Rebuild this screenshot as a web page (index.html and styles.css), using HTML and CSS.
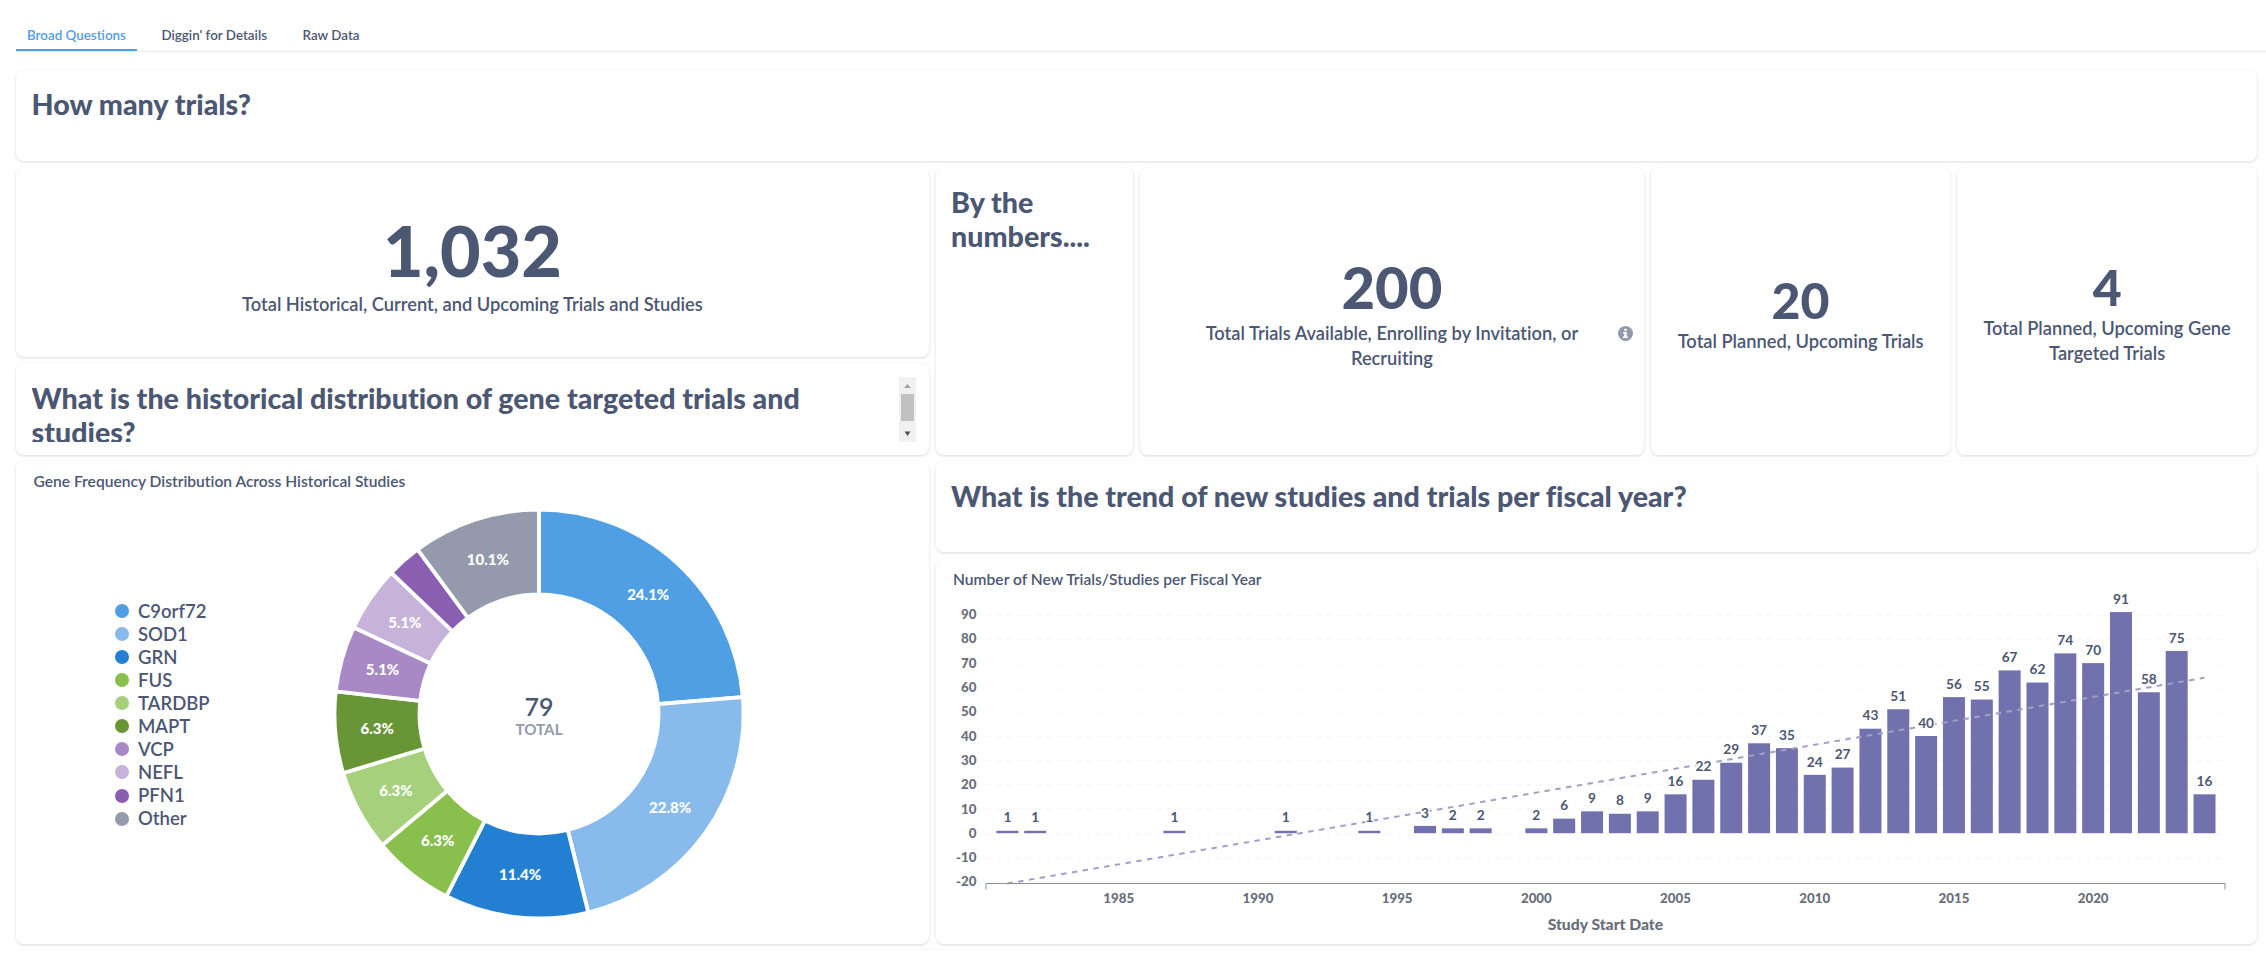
FILE: index.html
```html
<!DOCTYPE html>
<html lang="en">
<head>
<meta charset="utf-8">
<title>Trials dashboard</title>
<link rel="stylesheet" href="styles.css">
</head>
<body>
<nav class="tabs">
  <a class="tab tab-active">Broad Questions</a>
  <a class="tab">Diggin' for Details</a>
  <a class="tab">Raw Data</a>
</nav>
<main class="grid">
  <section class="card heading-card span-full"><h2 class="heading">How many trials?</h2></section>

  <section class="card scalar span-total">
    <div class="number number-xl">1,032</div>
    <div class="label">Total Historical, Current, and Upcoming Trials and Studies</div>
  </section>
  <section class="card heading-card span-by"><h2 class="heading">By the numbers....</h2></section>
  <section class="card scalar span-available">
    <div class="number number-lg">200</div>
    <div class="label label-narrow">Total Trials Available, Enrolling by Invitation, or Recruiting</div>
    <svg class="info" viewBox="0 0 16 16"><circle cx="8" cy="8" r="8" fill="#949aab"/><path d="M6.6 2.8h2.8v2.3H6.6zM5.4 6.4h4v4.8h1.3v1.7H5.3v-1.7h1.3V8.1H5.4z" fill="#fff"/></svg>
  </section>
  <section class="card scalar span-planned">
    <div class="number number-md">20</div>
    <div class="label">Total Planned, Upcoming Trials</div>
  </section>
  <section class="card scalar span-gene">
    <div class="number number-md">4</div>
    <div class="label">Total Planned, Upcoming Gene Targeted Trials</div>
  </section>

  <section class="card heading-card span-hist">
    <div class="scroller">
      <h2 class="heading">What is the historical distribution of gene targeted trials and studies?</h2>
      <div class="scrollbar">
        <svg class="arrow" viewBox="0 0 17 17"><path d="M5 11h7L8.5 7z" fill="#a3a3a3"/></svg>
        <div class="thumb"></div>
        <svg class="arrow" viewBox="0 0 17 17"><path d="M5.500 6.500h6L8.500 11z" fill="#505050"/></svg>
      </div>
    </div>
  </section>

  <section class="card chart-card span-pie">
    <h3 class="chart-title">Gene Frequency Distribution Across Historical Studies</h3>
    <div class="pie-body">
      <ul class="legend" id="legend"></ul>
      <svg class="pie" id="pie" viewBox="-206 -206 412 412"></svg>
    </div>
  </section>

  <section class="card heading-card span-trend"><h2 class="heading">What is the trend of new studies and trials per fiscal year?</h2></section>

  <section class="card chart-card span-bars">
    <h3 class="chart-title">Number of New Trials/Studies per Fiscal Year</h3>
    <svg class="bars" id="bars" viewBox="935.6 588.5 1321 355"></svg>
  </section>
  <section class="card span-next"></section>
</main>
<script src="charts.js"></script>
</body>
</html>
```
FILE: styles.css
```css
* { box-sizing: border-box; }
html, body { height: 958px; overflow: hidden; }
body {
  margin: 0;
  background: #fff;
  color: #4c5773;
  font-family: Lato, "Liberation Sans", sans-serif;
  font-weight: 600;
  font-variant-ligatures: none;
}
.tabs {
  display: flex;
  gap: 13.5px;
  margin-left: 16px;
  height: 52px;
  padding-top: 18px;
  border-bottom: 1px solid #e9eaec;
}
.tab {
  height: 33px;
  padding: 9px 11px 0;
  font-size: 13.4px;
  line-height: 17px;
  white-space: nowrap;
}
.tab-active { color: #509ee3; border-bottom: 2px solid #509ee3; }
.grid {
  display: grid;
  grid-template-columns: repeat(22, minmax(0, 1fr));
  grid-template-rows: repeat(18, 42.55px) 7.2px;
  gap: 6.4px 6.8px;
  margin: 17.5px 9px 0 16px;
}
.card {
  background: #fff;
  border-radius: 8px;
  box-shadow: 0 1px 3px rgba(0, 0, 0, 0.15);
  min-width: 0;
  min-height: 0;
}
.span-full { grid-column: 1 / 23; grid-row: 1 / 3; }
.span-total { grid-column: 1 / 10; grid-row: 3 / 7; }
.span-by { grid-column: 10 / 12; grid-row: 3 / 9; }
.span-available { grid-column: 12 / 17; grid-row: 3 / 9; }
.span-planned { grid-column: 17 / 20; grid-row: 3 / 9; }
.span-gene { grid-column: 20 / 23; grid-row: 3 / 9; }
.span-hist { grid-column: 1 / 10; grid-row: 7 / 9; }
.span-pie { grid-column: 1 / 10; grid-row: 9 / 19; }
.span-trend { grid-column: 10 / 23; grid-row: 9 / 11; }
.span-bars { grid-column: 10 / 23; grid-row: 11 / 19; }
.span-next { grid-column: 1 / 23; grid-row: 19; border-radius: 8px 8px 0 0; box-shadow: 0 -1px 2px rgba(0, 0, 0, 0.04); }

.heading-card { padding: 14px 13px 13px 15.5px; }
.heading { margin: 0; padding-top: 3.5px; font-size: 28.6px; line-height: 34.3px; font-weight: 900; }
.scroller { display: flex; justify-content: space-between; height: 65px; overflow: hidden; }
.scrollbar { width: 17px; flex: none; background: #f1f1f1; display: flex; flex-direction: column; align-items: center; }
.arrow { display: block; width: 17px; height: 17px; }
.thumb { width: 13px; height: 27px; background: #c1c1c1; margin-bottom: 4px; }

.scalar {
  position: relative;
  display: flex;
  flex-direction: column;
  align-items: center;
  justify-content: center;
  padding: 6px 20px 0;
  text-align: center;
}
.number { font-weight: 900; }
.number-xl { font-size: 70px; line-height: 74px; margin-bottom: 5px; }
.number-lg { font-size: 58px; line-height: 60px; margin-bottom: 4px; }
.number-md { font-size: 50px; line-height: 52px; margin-bottom: 3px; }
.label { font-size: 18.3px; line-height: 25px; }
.label-narrow { width: 400px; }
.info { position: absolute; right: 10.5px; top: 159px; width: 15px; height: 15px; }

.chart-card { display: flex; flex-direction: column; }
.chart-title { margin: 0; padding: 10px 0 0 17.5px; height: 30px; font-size: 15.6px; line-height: 20px; font-weight: 600; }
.pie-body { display: flex; align-items: flex-start; }
.legend { list-style: none; margin: 108.5px 0 0 98.5px; padding: 0; width: 218.5px; }
.legend-item { display: flex; align-items: center; gap: 9.5px; height: 23.07px; font-size: 18.5px; line-height: 23px; }
.dot { width: 14px; height: 14px; border-radius: 50%; flex: none; }
.pie { width: 412px; height: 412px; margin-top: 17px; display: block; }
.bars { width: 1321px; height: 355px; display: block; }
.slice { stroke: #fff; stroke-width: 3.8; }
.slice-label { fill: #fff; font-size: 15px; font-weight: 900; text-anchor: middle; }
.total { fill: #4c5773; font-size: 25px; text-anchor: middle; }
.total-caption { fill: #949aab; font-size: 15.2px; font-weight: 700; text-anchor: middle; }
.gridline { stroke: #f3f3f5; stroke-width: 1; stroke-dasharray: 5 5; }
.axis { stroke: #8d9099; stroke-width: 1; fill: none; }
.bar { fill: #7172ad; }
.trend { stroke: #a39fc6; stroke-width: 2; stroke-dasharray: 5.450 5.450; fill: none; }
.tick { fill: #696e7b; font-size: 13.3px; font-weight: 900; }
.tick-y { text-anchor: end; }
.tick-x { text-anchor: middle; }
.axis-title { fill: #696e7b; font-size: 15.7px; font-weight: 900; text-anchor: middle; }
.value { fill: #4c5773; font-size: 13.7px; font-weight: 700; text-anchor: middle; stroke: #fff; stroke-width: 3; paint-order: stroke; stroke-linejoin: round; }
```
FILE: charts.js
```js
const NS = "http://www.w3.org/2000/svg";
function add(parent, tag, attrs, text) {
  const el = document.createElementNS(NS, tag);
  for (const k in attrs) el.setAttribute(k, attrs[k]);
  if (text !== undefined) el.textContent = text;
  parent.appendChild(el);
  return el;
}

// Donut of gene frequencies
const genes = [
  ["C9orf72", 19, "#509ee3", "24.1%"],
  ["SOD1", 18, "#88bbec", "22.8%"],
  ["GRN", 9, "#227fd2", "11.4%"],
  ["FUS", 5, "#88bf4d", "6.3%"],
  ["TARDBP", 5, "#a6d07b", "6.3%"],
  ["MAPT", 5, "#689636", "6.3%"],
  ["VCP", 4, "#a989c5", "5.1%"],
  ["NEFL", 4, "#c7b3da", "5.1%"],
  ["PFN1", 2, "#8a5eb0", ""],
  ["Other", 8, "#949aab", "10.1%"]
];
const pie = document.getElementById("pie");
const legend = document.getElementById("legend");
const R = 204.5, r = 119.5;
// Each slice gets a fixed pad on top of its share of the circle
const PAD = 0.0165;
const unit = (2 * Math.PI - genes.length * PAD) / 79;
const at = (rad, a) => (rad * Math.sin(a)).toFixed(2) + " " + (-rad * Math.cos(a)).toFixed(2);
let angle = 0;
const labels = [];
genes.forEach(([name, count, color, pct]) => {
  const end = angle + count * unit + PAD;
  add(pie, "path", {
    class: "slice", fill: color,
    d: `M${at(R, angle)}A${R} ${R} 0 0 1 ${at(R, end)}L${at(r, end)}A${r} ${r} 0 0 0 ${at(r, angle)}Z`
  });
  labels.push([pct, (angle + end) / 2]);
  angle = end;
  const li = document.createElement("li");
  li.className = "legend-item";
  const dot = document.createElement("span");
  dot.className = "dot";
  dot.style.background = color;
  li.append(dot, name);
  legend.appendChild(li);
});
labels.forEach(([t, a]) => {
  if (t) add(pie, "text", { class: "slice-label", x: 162 * Math.sin(a) - 0.5, y: -162 * Math.cos(a) + 5 }, t);
});
add(pie, "text", { class: "total", x: 0, y: 1.5 }, "79");
add(pie, "text", { class: "total-caption", x: 0, y: 21 }, "TOTAL");

// Studies per fiscal year
const counts = {
  1981: 1, 1982: 1, 1987: 1, 1991: 1, 1994: 1, 1996: 3, 1997: 2, 1998: 2, 2000: 2, 2001: 6, 2002: 9,
  2003: 8, 2004: 9, 2005: 16, 2006: 22, 2007: 29, 2008: 37, 2009: 35, 2010: 24, 2011: 27, 2012: 43,
  2013: 51, 2014: 40, 2015: 56, 2016: 55, 2017: 67, 2018: 62, 2019: 74, 2020: 70, 2021: 91, 2022: 58,
  2023: 75, 2024: 16
};
const bars = document.getElementById("bars");
const X = y => 1007 + (y - 1981) * 27.84;
const Y = v => 832.7 - v * 2.43;
for (let v = -20; v <= 90; v += 10) {
  if (v > -20) add(bars, "line", { class: "gridline", x1: 986, x2: 2225, y1: Math.round(Y(v)) + 0.5, y2: Math.round(Y(v)) + 0.5 });
  add(bars, "text", { class: "tick tick-y", x: 976, y: Y(v) + 4.6 }, v);
}
for (const y in counts) {
  add(bars, "rect", { class: "bar", x: X(y) - 11, y: Y(counts[y]), width: 22, height: counts[y] * 2.43 });
}
add(bars, "path", { class: "trend", d: "M1007 883L2204 677.3" });
add(bars, "path", { class: "axis", d: "M985.6 889V883H2224.6V889" });
for (const y in counts) {
  add(bars, "text", { class: "value", x: X(y), y: Y(counts[y]) - 8.300 }, counts[y]);
}
for (let y = 1985; y <= 2020; y += 5) add(bars, "text", { class: "tick tick-x", x: X(y), y: 902 }, y);
add(bars, "text", { class: "axis-title", x: 1605, y: 929 }, "Study Start Date");
```
